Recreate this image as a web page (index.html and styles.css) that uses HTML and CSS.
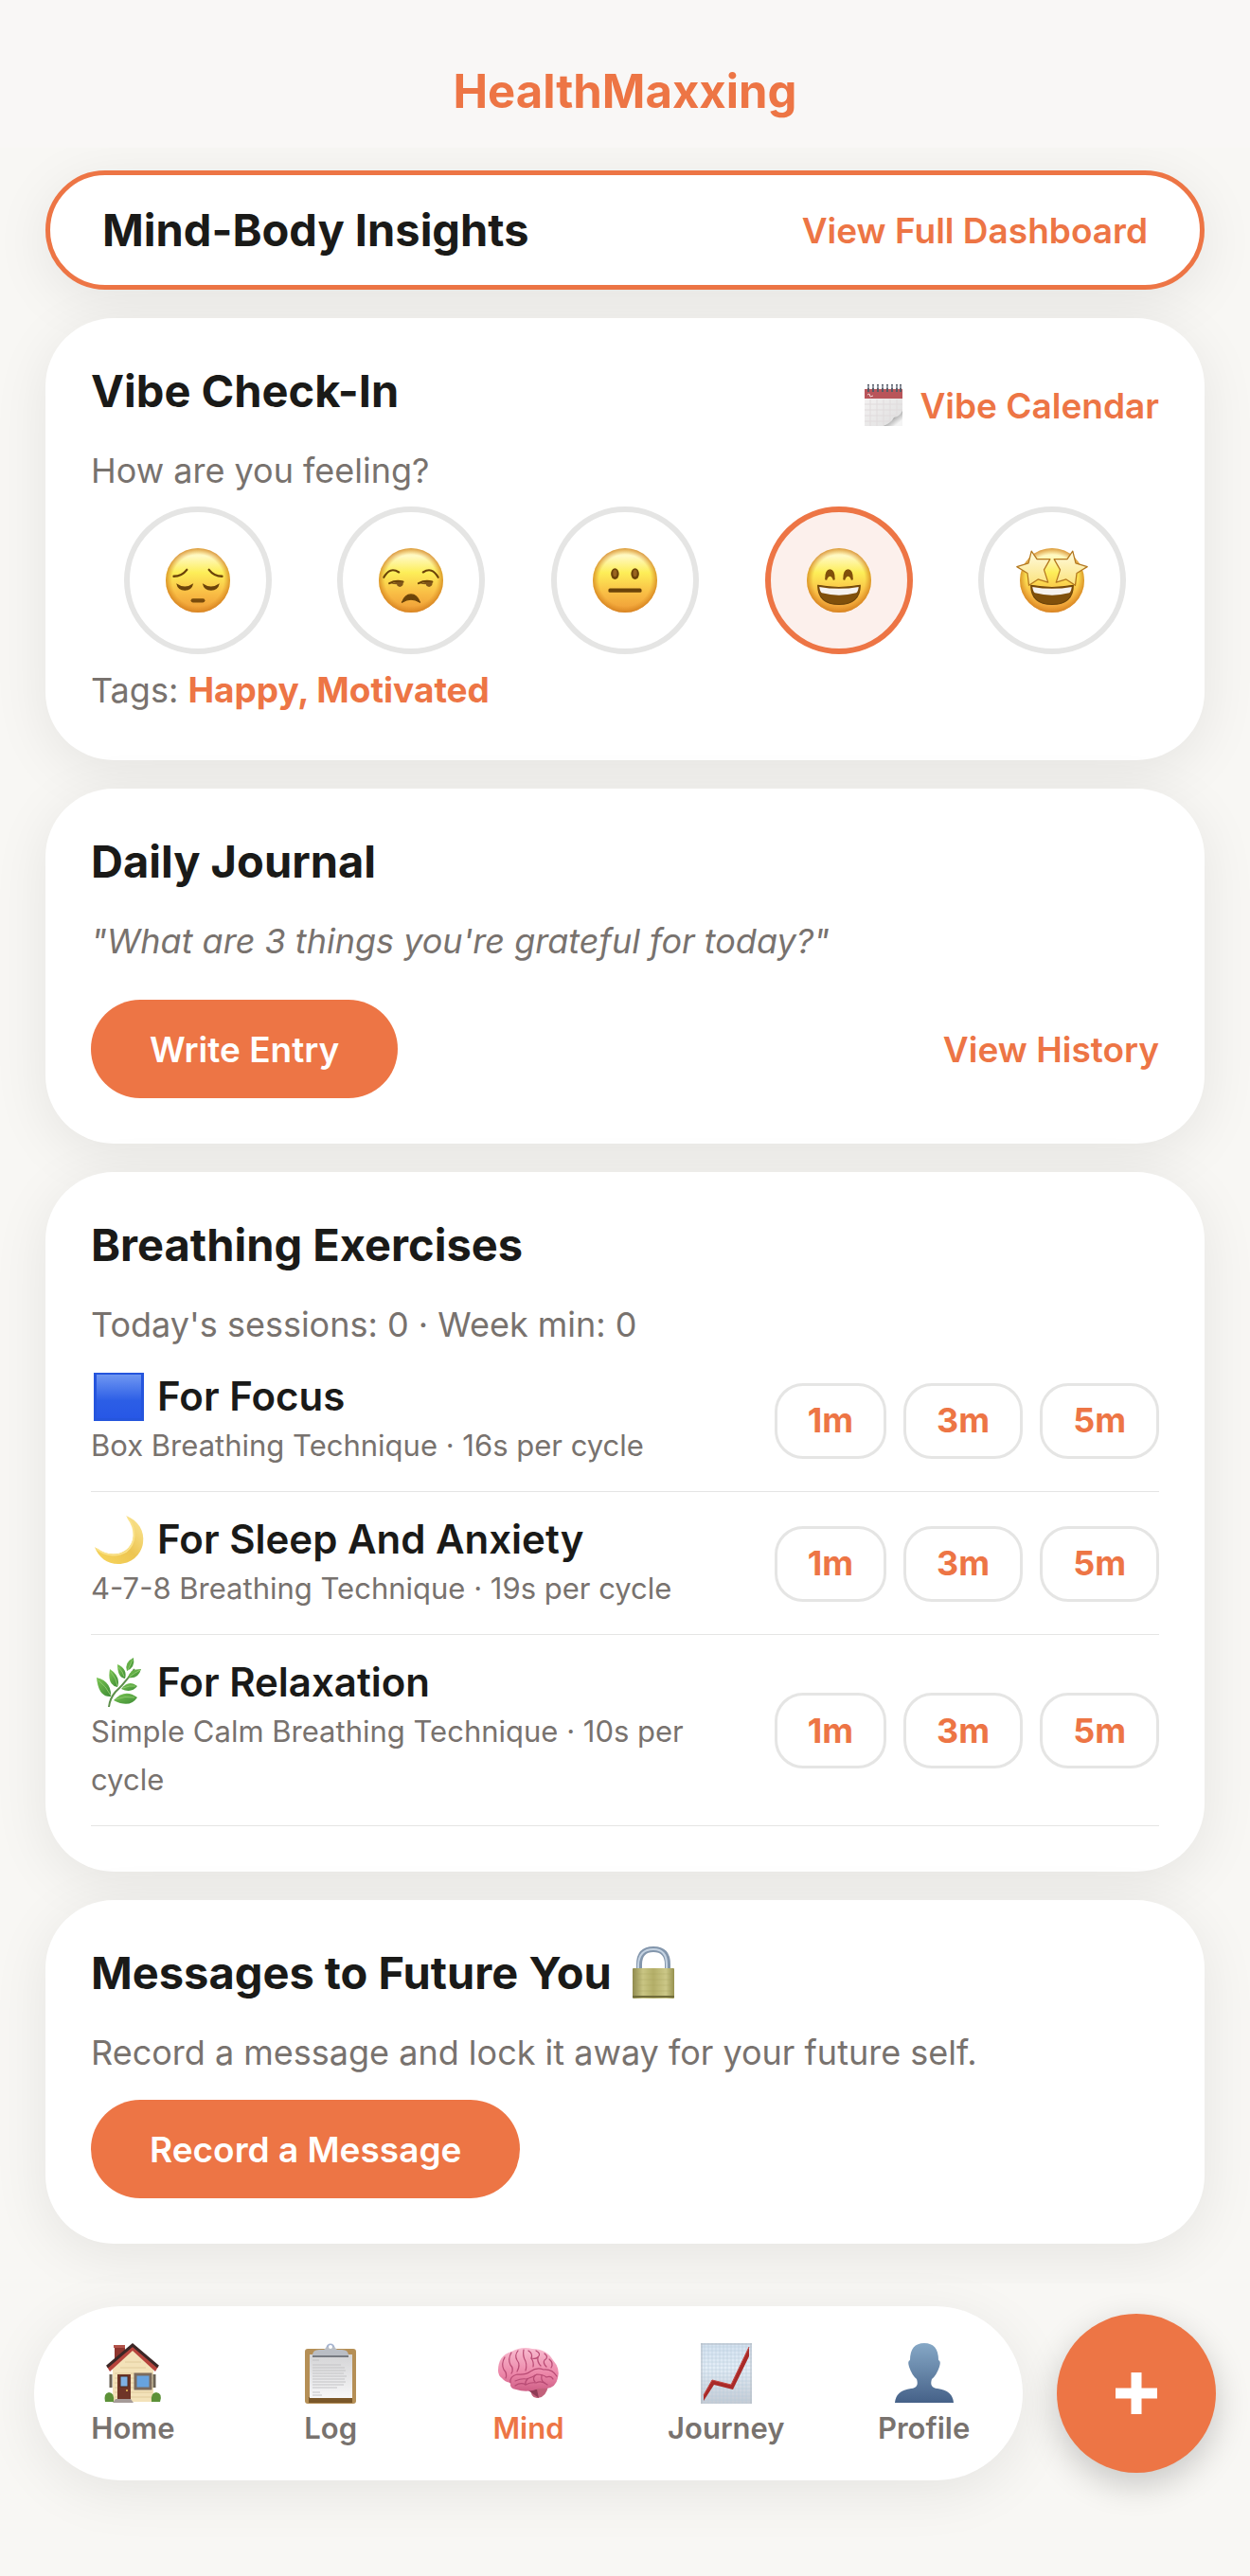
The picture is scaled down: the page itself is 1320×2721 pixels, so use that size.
FILE: index.html
```html
<!DOCTYPE html>
<html lang="en">
<head>
    <meta charset="UTF-8">
    <meta name="viewport" content="width=device-width, initial-scale=1.0">
    <title>HealthMaxxing</title>
    <link rel="stylesheet" href="styles.css">
</head>
<body>
    <!-- shared gradients -->
    <svg class="defs" width="0" height="0" aria-hidden="true">
        <defs>
            <linearGradient id="faceFill" x1="0" y1="0" x2="0" y2="1">
                <stop offset="0" stop-color="#fdf0a0"/>
                <stop offset="0.12" stop-color="#fff9c4"/>
                <stop offset="0.38" stop-color="#fdee58"/>
                <stop offset="0.7" stop-color="#f9bd45"/>
                <stop offset="1" stop-color="#ee9a35"/>
            </linearGradient>
            <radialGradient id="faceEdge">
                <stop offset="0.8" stop-color="#d98a1e" stop-opacity="0"/>
                <stop offset="1" stop-color="#d07c1c" stop-opacity="0.75"/>
            </radialGradient>
            <linearGradient id="starFill" x1="0" y1="0" x2="0" y2="1">
                <stop offset="0" stop-color="#fffbe0"/>
                <stop offset="1" stop-color="#fbe27a"/>
            </linearGradient>
            <linearGradient id="leafFill" x1="0" y1="0" x2="1" y2="1">
                <stop offset="0" stop-color="#7cc653"/>
                <stop offset="1" stop-color="#3c8b35"/>
            </linearGradient>
        </defs>
    </svg>

    <header class="app-header">
        <h1 class="brand">HealthMaxxing</h1>
    </header>

    <main class="content">
        <section class="insights">
            <h2 class="card-title">Mind-Body Insights</h2>
            <a href="#dashboard" class="link">View Full Dashboard</a>
        </section>

        <section class="card">
            <div class="card-header">
                <h2 class="card-title">Vibe Check-In</h2>
                <a href="#calendar" class="link">
                    <svg class="link-icon" viewBox="0 0 40 44" aria-hidden="true">
                        <defs>
                            <linearGradient id="calPage" x1="0" y1="0" x2="1" y2="1">
                                <stop offset="0" stop-color="#f6f4f4"/>
                                <stop offset="1" stop-color="#dedede"/>
                            </linearGradient>
                            <linearGradient id="calCurl" x1="0" y1="0" x2="1" y2="1">
                                <stop offset="0.3" stop-color="#444"/>
                                <stop offset="0.55" stop-color="#bbb"/>
                                <stop offset="0.8" stop-color="#f4f4f4"/>
                            </linearGradient>
                        </defs>
                        <path d="M0 5h40v39H0z" fill="url(#calPage)"/>
                        <path d="M0 5h40v10H0z" fill="#b9555a"/>
                        <path d="M3 11l2-1 1 3 3-1" stroke="#f2d4d5" fill="none"/>
                        <path d="M0 21h40M0 27h40M0 33h34M0 39h28M6 16v28M13 16v28M20 16v28M27 16v24M34 16v16" stroke="#e0dbdc" fill="none"/>
                        <path d="M40 28Q37 34 31 35Q28 41 20 44H40Z" fill="url(#calCurl)"/>
                        <path d="M4 0v8M9 0v8M14 0v8M19 0v8M24 0v8M29 0v8M34 0v8M38 0v8" stroke="#565b66" stroke-width="2"/>
                        <path d="M4 1v3M9 1v3M14 1v3M19 1v3M24 1v3M29 1v3M34 1v3M38 1v3" stroke="#c9ced8"/>
                    </svg>
                    Vibe Calendar
                </a>
            </div>
            <p class="muted">How are you feeling?</p>
            <div class="moods">
                <button type="button" class="mood" aria-label="Sad">
                    <svg viewBox="0 0 64 64" aria-hidden="true">
                        <circle cx="32" cy="32" r="32" fill="url(#faceFill)"/>
                        <circle cx="32" cy="32" r="32" fill="url(#faceEdge)"/>
                        <g fill="none" stroke="#6b4309" stroke-width="2.2" stroke-linecap="round">
                            <path d="M8 28Q16 28 21 21.500"/>
                            <path d="M43 21.500Q48 28 56 28"/>
                        </g>
                        <path d="M10.500 35Q19 41 27.500 35Q26 42 19 42Q12 42 10.500 35Z" fill="#6b4309"/>
                        <path d="M36.500 35Q45 41 53.500 35Q52 42 45 42Q38 42 36.500 35Z" fill="#6b4309"/>
                        <rect x="25" y="50" width="14" height="4" rx="2" fill="#7a4c0c"/>
                    </svg>
                </button>
                <button type="button" class="mood" aria-label="Meh">
                    <svg viewBox="0 0 64 64" aria-hidden="true">
                        <circle cx="32" cy="32" r="32" fill="url(#faceFill)"/>
                        <circle cx="32" cy="32" r="32" fill="url(#faceEdge)"/>
                        <g fill="none" stroke="#6b4309" stroke-width="2" stroke-linecap="round">
                            <path d="M5 29Q11 18 20 24"/>
                            <path d="M44 24Q53 18 59 29"/>
                            <path d="M10.500 35Q17 31.500 24 33.500"/>
                            <path d="M39.500 35Q46 31.500 53 33.500"/>
                        </g>
                        <path d="M12 35.500Q18 33 24 33.500Q25 38 21 38.500Q18 38 18 36Z" fill="#80561a"/>
                        <path d="M41 35.500Q47 33 53 33.500Q54 38 50 38.500Q47 38 47 36Z" fill="#80561a"/>
                        <path d="M23 54Q26 46 32 46Q38 46 41 54Q32 48 23 54Z" fill="#6b4309" stroke="#6b4309" stroke-linejoin="round"/>
                    </svg>
                </button>
                <button type="button" class="mood" aria-label="Neutral">
                    <svg viewBox="0 0 64 64" aria-hidden="true">
                        <circle cx="32" cy="32" r="32" fill="url(#faceFill)"/>
                        <circle cx="32" cy="32" r="32" fill="url(#faceEdge)"/>
                        <ellipse cx="22" cy="25.500" rx="4" ry="5.500" fill="#6b4309"/>
                        <ellipse cx="42" cy="25.500" rx="4" ry="5.500" fill="#6b4309"/>
                        <ellipse cx="22" cy="25" rx="2" ry="3.500" fill="#98641f"/>
                        <ellipse cx="42" cy="25" rx="2" ry="3.500" fill="#98641f"/>
                        <rect x="15.500" y="40" width="33" height="4" rx="1.500" fill="#6b4309"/>
                    </svg>
                </button>
                <button type="button" class="mood selected" aria-label="Happy" aria-pressed="true">
                    <svg viewBox="0 0 64 64" aria-hidden="true">
                        <circle cx="32" cy="32" r="32" fill="url(#faceFill)"/>
                        <circle cx="32" cy="32" r="32" fill="url(#faceEdge)"/>
                        <path d="M18 31Q18 21 23 21Q28 21 28 31Q26 33 25.500 30Q23 26 20.500 30Q20 33 18 31Z" fill="#80500b"/>
                        <path d="M36 31Q36 21 41 21Q46 21 46 31Q44 33 43.500 30Q41 26 38.500 30Q38 33 36 31Z" fill="#80500b"/>
                        <path d="M11 37Q32 41 53 37Q53 56 32 56Q11 56 11 37Z" fill="#80500b" stroke="#6b4309"/>
                        <path d="M12.500 38.500Q32 42 51.500 38.500Q51 43 49 44.500Q32 49 15 44.500Q13 43 12.500 38.500Z" fill="#f6f3f0"/>
                    </svg>
                </button>
                <button type="button" class="mood" aria-label="Amazing">
                    <svg viewBox="0 0 64 64" aria-hidden="true">
                        <circle cx="32" cy="32" r="32" fill="url(#faceFill)"/>
                        <circle cx="32" cy="32" r="32" fill="url(#faceEdge)"/>
                        <path d="M11 37Q32 41 53 37Q53 56 32 56Q11 56 11 37Z" fill="#80500b" stroke="#6b4309"/>
                        <path d="M12.500 38.500Q32 42 51.500 38.500Q51 43 49 44.500Q32 49 15 44.500Q13 43 12.500 38.500Z" fill="#f6f3f0"/>
                        <g fill="url(#starFill)" stroke="#b3771d" stroke-width="1.200" stroke-linejoin="round">
                            <path d="M11.500 3L17 11L30 11L24 21.500L28 34L18 31L9 37L7.500 25L-3 18.500L8.500 15Z"/>
                            <path d="M52.500 3L47 11L34 11L40 21.500L36 34L46 31L55 37L56.500 25L67 18.500L55.500 15Z"/>
                        </g>
                    </svg>
                </button>
            </div>
            <p class="muted">Tags: <strong class="tags">Happy, Motivated</strong></p>
        </section>

        <section class="card">
            <h2 class="card-title">Daily Journal</h2>
            <p class="muted prompt">"What are 3 things you're grateful for today?"</p>
            <div class="journal-actions">
                <button type="button" class="btn-primary">Write Entry</button>
                <a href="#history" class="link">View History</a>
            </div>
        </section>

        <section class="card">
            <h2 class="card-title">Breathing Exercises</h2>
            <p class="muted">Today's sessions: 0 · Week min: 0</p>
            <ul class="exercises">
                <li class="exercise">
                    <div class="exercise-info">
                        <h3 class="exercise-name">
                            <svg viewBox="0 0 56 52" aria-hidden="true">
                                <defs>
                                    <linearGradient id="blueSquare" x1="0" y1="0" x2="0" y2="1">
                                        <stop offset="0" stop-color="#6f97f2"/>
                                        <stop offset="0.6" stop-color="#2c5ee6"/>
                                        <stop offset="1" stop-color="#2757e6"/>
                                    </linearGradient>
                                </defs>
                                <rect x="3" y="1" width="53" height="51" fill="#2555dd"/>
                                <rect x="6" y="3" width="47" height="46" fill="url(#blueSquare)"/>
                            </svg>
                            For Focus
                        </h3>
                        <p class="exercise-detail">Box Breathing Technique · 16s per cycle</p>
                    </div>
                    <div class="durations">
                        <button type="button" class="duration">1m</button>
                        <button type="button" class="duration">3m</button>
                        <button type="button" class="duration">5m</button>
                    </div>
                </li>
                <li class="exercise">
                    <div class="exercise-info">
                        <h3 class="exercise-name">
                            <svg viewBox="0 0 56 52" aria-hidden="true">
                                <defs>
                                    <linearGradient id="moonFill" x1="0" y1="1" x2="1" y2="0">
                                        <stop offset="0" stop-color="#f7d65c"/>
                                        <stop offset="0.5" stop-color="#edc552"/>
                                        <stop offset="1" stop-color="#fbe89a"/>
                                    </linearGradient>
                                </defs>
                                <path d="M37 1C50 6 57 17 55 30C53 43 42 52 29 52C17 52 8 45 4 34C13 42 27 44 36 38C48 30 48 14 37 1Z" fill="url(#moonFill)"/>
                                <path d="M39 3C48 15 48 30 37 39C27 45 15 43 6 36" fill="none" stroke="#fae28a" stroke-width="2"/>
                            </svg>
                            For Sleep And Anxiety
                        </h3>
                        <p class="exercise-detail">4-7-8 Breathing Technique · 19s per cycle</p>
                    </div>
                    <div class="durations">
                        <button type="button" class="duration">1m</button>
                        <button type="button" class="duration">3m</button>
                        <button type="button" class="duration">5m</button>
                    </div>
                </li>
                <li class="exercise">
                    <div class="exercise-info">
                        <h3 class="exercise-name">
                            <svg viewBox="0 0 56 52" aria-hidden="true">
                                <path d="M19 52Q20 43 26 36Q36 27 46 12" fill="none" stroke="#5d8f4a" stroke-width="2"/>
                                <g fill="url(#leafFill)">
                                    <path d="M6 21Q22 25 21 41Q8 42 6 21Z"/>
                                    <path d="M20 12Q32 20 28 31Q17 29 20 12Z"/>
                                    <path d="M28 7Q39 12 36 22Q28 21 28 7Z"/>
                                    <path d="M45 0Q47 10 38 14Q35 5 45 0Z"/>
                                    <path d="M53 12Q50 23 39 21Q41 12 53 12Z"/>
                                    <path d="M32 33Q40 23 49 30Q43 38 32 33Z"/>
                                    <path d="M24 45Q36 32 49 42Q41 54 24 45Z"/>
                                </g>
                                <g fill="none" stroke="#8cc96c" stroke-width="1">
                                    <path d="M8 24Q16 30 21 40"/>
                                    <path d="M21 15Q27 22 28 30"/>
                                    <path d="M29 10Q34 15 35 20"/>
                                    <path d="M44 2L39 13"/>
                                    <path d="M52 13Q46 16 41 20"/>
                                    <path d="M34 32Q41 29 47 30"/>
                                    <path d="M26 44Q36 40 46 42"/>
                                </g>
                            </svg>
                            For Relaxation
                        </h3>
                        <p class="exercise-detail">Simple Calm Breathing Technique · 10s per cycle</p>
                    </div>
                    <div class="durations">
                        <button type="button" class="duration">1m</button>
                        <button type="button" class="duration">3m</button>
                        <button type="button" class="duration">5m</button>
                    </div>
                </li>
            </ul>
        </section>

        <section class="card">
            <h2 class="card-title">
                Messages to Future You
                <svg class="title-icon" viewBox="0 0 56 56" aria-hidden="true">
                    <defs>
                        <linearGradient id="lockBody">
                            <stop offset="0" stop-color="#8f8a4e"/>
                            <stop offset="0.25" stop-color="#c9c583"/>
                            <stop offset="0.5" stop-color="#b3ae68"/>
                            <stop offset="0.8" stop-color="#ccc888"/>
                            <stop offset="1" stop-color="#96914f"/>
                        </linearGradient>
                    </defs>
                    <path d="M13 26V19Q13 3 28 3Q43 3 43 19V26" fill="none" stroke="#8396ac" stroke-width="6"/>
                    <path d="M12 26V19Q13 3 28 3Q42 3 42 19V26" fill="none" stroke="#c5d3e2" stroke-width="2"/>
                    <rect x="6" y="23" width="44" height="32" rx="1" fill="url(#lockBody)"/>
                    <path d="M6 29h44M6 35h44M6 41h44M6 47h44" stroke="#a5a05c" opacity="0.3"/>
                    <path d="M6 53h44" stroke="#716d3a" stroke-width="2"/>
                </svg>
            </h2>
            <p class="muted">Record a message and lock it away for your future self.</p>
            <button type="button" class="btn-primary record">Record a Message</button>
        </section>
    </main>

    <footer class="bottom-bar">
        <nav class="tabs">
            <a href="#home" class="tab">
                <svg viewBox="0 0 66 66" aria-hidden="true">
                    <path d="M14 3h11v20H14z" fill="#8e352e"/>
                    <path d="M13 3h12v3H13z" fill="#b2534a"/>
                    <path d="M12 28L33 6L55 28V63H12Z" fill="#f3e2b9"/>
                    <path d="M14 33h40M14 38h40M14 43h40M14 48h40M14 53h40M14 58h40M20 27h27M25 21h17" stroke="#e0cb9d"/>
                    <path d="M33 3L60 26L57 31L33 9L9 31L6 26Z" fill="#b6443c"/>
                    <path d="M6 26L33 3L60 26" fill="none" stroke="#3b2726" stroke-width="3"/>
                    <path d="M17 34h14v27H17z" fill="#6f3527"/>
                    <path d="M20 36h8v11h-8z" fill="#7fb1e3" stroke="#4d2a20"/>
                    <path d="M36 34h16v15H36z" fill="#67a3df" stroke="#7b6b5e" stroke-width="3"/>
                    <path d="M10 34v14M56 34v14" stroke="#6b6255" stroke-width="3"/>
                    <circle cx="27" cy="51" r="1" fill="#efc45c"/>
                    <path d="M4 63Q2 54 8 53Q14 53 13 63Z" fill="#5c9138"/>
                    <path d="M53 63Q52 53 58 53Q65 54 62 63Z" fill="#5c9138"/>
                    <path d="M15 60h16l3 4H12z" fill="#a59b98"/>
                </svg>
                <span>Home</span>
            </a>
            <a href="#log" class="tab">
                <svg viewBox="0 0 66 66" aria-hidden="true">
                    <defs>
                        <linearGradient id="paper" x1="0" y1="0" x2="0" y2="1">
                            <stop offset="0" stop-color="#d4d4d6"/>
                            <stop offset="1" stop-color="#f7f7f8"/>
                        </linearGradient>
                    </defs>
                    <rect x="6" y="7" width="54" height="58" rx="3" fill="#b58f56"/>
                    <path d="M10 58h46v6H10z" fill="#7a5729"/>
                    <path d="M11 13h45v46H11z" fill="url(#paper)"/>
                    <path d="M14 19h7M14 24h30M14 27h34M14 30h35M14 33h33M14 36h36M14 39h34M14 42h35M14 45h33M14 48h26M14 53h8M14 56h10" stroke="#c3c3c5"/>
                    <circle cx="33" cy="6" r="3" fill="none" stroke="#a5b3cf" stroke-width="3"/>
                    <path d="M14 14Q14 8 21 8H26L29 5H37L40 8H45Q52 8 52 14Z" fill="#b9bdc4"/>
                    <circle cx="33" cy="5" r="2" fill="#fff"/>
                    <path d="M14 15h38" stroke="#777b82" stroke-width="2"/>
                </svg>
                <span>Log</span>
            </a>
            <a href="#mind" class="tab active" aria-current="page">
                <svg viewBox="0 0 66 66" aria-hidden="true">
                    <defs>
                        <linearGradient id="brainFill" x1="0" y1="0" x2="0" y2="1">
                            <stop offset="0" stop-color="#f8bcd0"/>
                            <stop offset="0.6" stop-color="#ec86a8"/>
                            <stop offset="1" stop-color="#ce5f86"/>
                        </linearGradient>
                    </defs>
                    <path d="M35 47Q35 60 43 59Q52 58 54 46Z" fill="#c2617b"/>
                    <path d="M30 49L44 59L42 50Z" fill="#8e3c56"/>
                    <path d="M1 30Q1 14 15 10Q26 4 37 7Q52 7 59 19Q67 28 64 38Q62 48 52 49Q44 48 38 51Q28 53 20 50Q13 49 14 43Q8 42 5 38Q1 35 1 30Z" fill="url(#brainFill)"/>
                    <g fill="none" stroke="#b84b74" stroke-width="1.200" stroke-linecap="round">
                        <path d="M14 43Q13 36 21 34Q30 35 35 31Q42 26 49 29Q58 28 63 36"/>
                        <path d="M8 16Q4 23 7 29Q11 33 9 38"/>
                        <path d="M15 11Q11 18 14 24Q18 28 15 33"/>
                        <path d="M22 9Q18 14 21 19Q25 24 21 31"/>
                        <path d="M28 8Q27 14 29 18Q32 23 30 30"/>
                        <path d="M33 9Q38 12 36 17Q39 21 38 26"/>
                        <path d="M41 9Q47 12 43 16Q42 21 46 25"/>
                        <path d="M36 17Q41 18 43 16"/>
                        <path d="M50 12Q55 16 50 19Q48 22 52 26"/>
                        <path d="M55 18Q60 22 57 27"/>
                        <path d="M19 41Q26 38 31 39Q38 37 42 34Q48 34 52 37Q57 35 59 39"/>
                        <path d="M19 46Q25 42 30 45Q36 42 41 43Q47 40 53 45"/>
                        <path d="M47 35Q46 41 50 43M32 39Q29 42 30 45M40 35Q37 39 40 42"/>
                    </g>
                </svg>
                <span>Mind</span>
            </a>
            <a href="#journey" class="tab">
                <svg viewBox="0 0 66 66" aria-hidden="true">
                    <defs>
                        <linearGradient id="chartPage" x1="0" y1="0" x2="0" y2="1">
                            <stop offset="0" stop-color="#d3e1ef"/>
                            <stop offset="0.4" stop-color="#e4eef7"/>
                            <stop offset="1" stop-color="#c4cbd4"/>
                        </linearGradient>
                    </defs>
                    <rect x="6" y="1" width="54" height="64" fill="url(#chartPage)"/>
                    <path d="M6 5h54M6 9h54M6 13h54M6 17h54M6 21h54M6 25h54M6 29h54M6 33h54M6 37h54M6 41h54M6 45h54M6 49h54M6 53h54M6 57h54M6 61h54M10 1v64M14 1v64M18 1v64M22 1v64M26 1v64M30 1v64M34 1v64M38 1v64M42 1v64M46 1v64M50 1v64M54 1v64" stroke="#b7c8d9" stroke-width="0.500"/>
                    <path d="M6 2h54M7 1v64M59 1v64" stroke="#b4bcc5" fill="none"/>
                    <path d="M9 56L18 40L38 45L57 5V15L40 50L20 45L9 62Z" fill="#a92a28"/>
                    <path d="M9 56L18 40L38 45L57 5" fill="none" stroke="#c64742"/>
                </svg>
                <span>Journey</span>
            </a>
            <a href="#profile" class="tab">
                <svg viewBox="0 0 66 66" aria-hidden="true">
                    <defs>
                        <linearGradient id="bust" x1="0" y1="0" x2="0" y2="1">
                            <stop offset="0" stop-color="#86a8c6"/>
                            <stop offset="1" stop-color="#456188"/>
                        </linearGradient>
                    </defs>
                    <path d="M33 1Q48 1 48 19Q51 20 49 26Q46 35 41 39Q38 48 47 49Q63 51 64 64H2Q3 51 19 49Q28 48 25 39Q20 35 17 26Q15 20 18 19Q18 1 33 1Z" fill="url(#bust)"/>
                </svg>
                <span>Profile</span>
            </a>
        </nav>
        <button type="button" class="fab" aria-label="Add">
            <svg viewBox="0 0 46 46" aria-hidden="true">
                <path d="M23 1v44M1 23h44" stroke="#fff" stroke-width="11"/>
            </svg>
        </button>
    </footer>
</body>
</html>
```
FILE: styles.css
```css
:root {
    --accent: #ed7545;
    --accent-soft: #fcf0ec;
    --text: #1a1a18;
    --muted: #78726e;
    --line: #e5e5e4;
    --page: #f8f7f4;
    --header: #f9f7f6;
    --card-shadow: 0 12px 60px rgba(0, 0, 0, 0.08);
}

* {
    margin: 0;
    padding: 0;
    box-sizing: border-box;
}

body {
    font-family: Inter, 'Liberation Sans', sans-serif;
    font-size: 36px;
    line-height: 51px;
    background: var(--page);
    color: var(--text);
}

button {
    font: inherit;
    cursor: pointer;
}

a {
    text-decoration: none;
}

svg {
    display: block;
    overflow: visible;
    flex-shrink: 0;
}

.defs {
    position: absolute;
}

/* Header */
.app-header {
    position: sticky;
    top: 0;
    z-index: 1;
    padding: 60px 48px 22px;
    background: var(--header);
    text-align: center;
}

.brand {
    font-size: 49px;
    line-height: 74px;
    font-weight: 700;
    color: var(--accent);
}

/* Cards */
.content {
    display: flex;
    flex-direction: column;
    gap: 30px;
    padding: 24px 48px 42px;
    overflow: hidden;
}

.insights,
.card {
    background: #fff;
    box-shadow: var(--card-shadow);
}

.insights {
    display: flex;
    justify-content: space-between;
    align-items: center;
    padding: 29px 55px;
    border: 5px solid var(--accent);
    border-radius: 64px;
}

.insights .card-title {
    margin-bottom: 0;
}

.card {
    padding: 48px;
    border-radius: 72px;
}

.card-header {
    display: flex;
    justify-content: space-between;
    align-items: center;
}

.card-title {
    display: flex;
    align-items: center;
    gap: 16px;
    margin-bottom: 30px;
    font-size: 48px;
    line-height: 58px;
    font-weight: 700;
}

.title-icon {
    width: 56px;
    height: 56px;
}

.card-title {
    font-size: 47px;
}

.link {
    display: flex;
    align-items: center;
    gap: 18px;
    color: var(--accent);
    font-size: 37px;
    font-weight: 600;
}

.link-icon {
    width: 40px;
    height: 44px;
}

.muted {
    color: var(--muted);
}

/* Vibe check-in */
.moods {
    display: flex;
    justify-content: space-around;
    margin: 12px 0;
}

.mood {
    display: flex;
    align-items: center;
    justify-content: center;
    width: 156px;
    height: 156px;
    background: #fff;
    border: 6px solid var(--line);
    border-radius: 50%;
}

.mood svg {
    width: 68px;
    height: 68px;
}

.mood.selected {
    background: var(--accent-soft);
    border-color: var(--accent);
}

.tags {
    color: var(--accent);
    font-size: 37px;
    font-weight: 700;
}

/* Journal */
.prompt {
    font-style: italic;
}

.journal-actions {
    display: flex;
    justify-content: space-between;
    align-items: center;
    margin-top: 36px;
}

.btn-primary {
    height: 104px;
    padding: 0 62px;
    border: none;
    border-radius: 52px;
    background: var(--accent);
    color: #fff;
    font-size: 37px;
    font-weight: 600;
}

.record {
    display: block;
    margin-top: 24px;
}

/* Breathing */
.exercises {
    list-style: none;
}

.exercise {
    display: flex;
    justify-content: space-between;
    align-items: center;
    gap: 36px;
    padding: 24px 0 23px;
    border-bottom: 1px solid var(--line);
}

.exercise-name {
    display: flex;
    align-items: center;
    gap: 14px;
    font-size: 42px;
    line-height: 52px;
    font-weight: 600;
}

.exercise-name svg {
    width: 56px;
    height: 52px;
}

.exercise-detail {
    color: var(--muted);
    font-size: 31px;
}

.durations {
    display: flex;
    flex-shrink: 0;
    gap: 18px;
}

.duration {
    height: 80px;
    padding: 0 32px;
    background: #fff;
    border: 3px solid var(--line);
    border-radius: 30px;
    color: var(--accent);
    font-weight: 700;
}

/* Bottom navigation */
.bottom-bar {
    display: flex;
    align-items: center;
    gap: 36px;
    padding: 24px 36px 102px;
}

.tabs {
    display: flex;
    flex: 1;
    padding: 38px 0 30px;
    background: #fff;
    border-radius: 92px;
    box-shadow: var(--card-shadow);
}

.tab {
    display: flex;
    flex: 1;
    flex-direction: column;
    align-items: center;
    color: var(--muted);
    font-size: 31px;
    line-height: 50px;
    font-weight: 600;
}

.tab svg {
    width: 66px;
    height: 66px;
}

.tab.active {
    color: var(--accent);
}

.fab {
    display: flex;
    align-items: center;
    justify-content: center;
    width: 168px;
    height: 168px;
    border: none;
    border-radius: 50%;
    background: var(--accent);
    box-shadow: 0 12px 36px rgba(0, 0, 0, 0.2);
}

.fab svg {
    width: 46px;
    height: 46px;
}
```
